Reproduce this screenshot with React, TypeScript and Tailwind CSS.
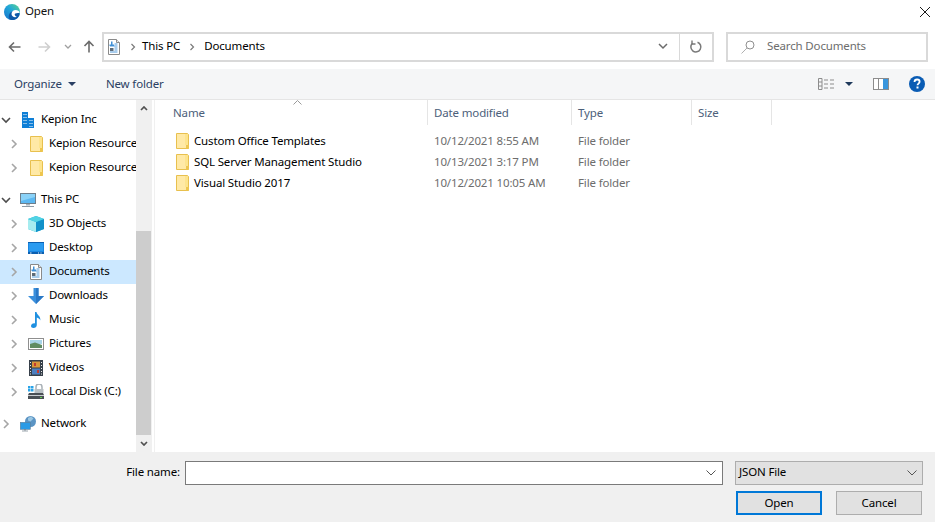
import type { ReactNode } from 'react'

const FONT = "font-['Noto_Sans','Open_Sans',sans-serif]"

function Chevron({ open }: { open?: boolean }) {
  return (
    <svg width="12" height="12" viewBox="0 0 12 12" className="shrink-0" fill="none">
      {open ? (
        <path d="M2 4l4 4 4-4" stroke="#4d4d4d" strokeWidth="1.6" />
      ) : (
        <path d="M4 2l4 4-4 4" stroke="#a6a6a6" strokeWidth="1.6" />
      )}
    </svg>
  )
}

function Folder() {
  return (
    <svg width="16" height="16" viewBox="0 0 16 16" className="shrink-0">
      <path d="M2.500 0.500h11l1 1v14h-12z" fill="#fde48d" stroke="#e8c04e" />
      <path d="M3 1h8v11h3v3H3z" fill="#ffe9a6" />
      <path d="M12 12h3v3.500h-3z" fill="#eec64f" />
    </svg>
  )
}

function DocIcon() {
  return (
    <svg width="16" height="16" viewBox="0 0 16 16" className="shrink-0">
      <path d="M2.500 0.500h8l3 3v12h-11z" fill="#fff" stroke="#8a8a8a" />
      <path d="M10.500 0.500v3h3" fill="#e6e6e6" stroke="#8a8a8a" />
      <path d="M8.500 5h3M4 7h7.500M8.500 9h3M8.500 11h3M4 13h7.500" stroke="#3f8fd6" strokeWidth="0.9" />
      <path d="M5 2.500h1.500v3H8V7H3.500V5.500H5z" fill="#3f8fd6" />
      <path d="M4 9h3.500v3H4z" fill="#5d6b78" />
    </svg>
  )
}

const ICONS: Record<string, ReactNode> = {
  building: (
    <svg width="16" height="16" viewBox="0 0 16 16" className="shrink-0">
      <path d="M2 0h6v16H2z" fill="#0f7fd6" />
      <path d="M8 6h6v10H8z" fill="#0f7fd6" />
      <path d="M3.500 2h1v1h-1zM5.500 2h1v1h-1zM3.500 5h1v1h-1zM5.500 5h1v1h-1zM3.500 8h1v1h-1zM5.500 8h1v1h-1zM3.500 11h1v1h-1zM5.500 11h1v1h-1zM9.500 8h1v1h-1zM11.500 8h1v1h-1zM9.500 11h1v1h-1zM11.500 11h1v1h-1zM9.500 14h1v1h-1zM11.500 14h1v1h-1z" fill="#fff" />
    </svg>
  ),
  folder: <Folder />,
  pc: (
    <svg width="16" height="16" viewBox="0 0 16 16" className="shrink-0">
      <rect x="0.500" y="1.500" width="15" height="10" fill="#5cb8f2" stroke="#6e7f8c" />
      <path d="M1 2h14v3L1 9z" fill="#8ad2f8" />
      <path d="M6 12h4v1.500H6z" fill="#a5b2bc" />
      <path d="M2 14h12v1H2z" fill="#8e9ba6" />
    </svg>
  ),
  cube: (
    <svg width="16" height="16" viewBox="0 0 16 16" className="shrink-0">
      <path d="M8 0l8 3v10l-8 3-8-3V3z" fill="#1fb6d6" />
      <path d="M0 3l8 3v10l-8-3z" fill="#a6ecef" />
      <path d="M8 6l8-3v10l-8 3z" fill="#1291c9" />
      <path d="M8 0l8 3-8 3-8-3z" fill="#52d3e4" />
    </svg>
  ),
  desktop: (
    <svg width="16" height="16" viewBox="0 0 16 16" className="shrink-0">
      <rect x="0" y="2" width="16" height="12" fill="#1a86e0" />
      <path d="M1 3h14v8H1z" fill="#2a9bf0" />
      <path d="M0 2h16v1H0zM0 12h16v2H0z" fill="#0b5fb0" />
      <path d="M2 12.500h1.500v1H2zM10 12.500h1v1h-1zM12.500 12.500h1v1h-1z" fill="#e6f2fb" />
    </svg>
  ),
  doc: <DocIcon />,
  download: (
    <svg width="16" height="16" viewBox="0 0 16 16" className="shrink-0">
      <path d="M5.500 0h5v8H16l-8 8-8-8h5.500z" fill="#3a8fdc" />
      <path d="M8 0h2.500v8H16l-8 8z" fill="#2a78c6" />
    </svg>
  ),
  music: (
    <svg width="16" height="16" viewBox="0 0 16 16" className="shrink-0">
      <path d="M7 0h1.500c.3 3 4.500 4 3.800 8.500C11.800 6.500 10 6 8.800 5.500V13c0 1.800-1.500 3-3.300 3C4 16 3 15.200 3 14c0-1.500 1.500-2.700 3.200-2.700.3 0 .6 0 .8.100z" fill="#1f90e0" />
    </svg>
  ),
  pictures: (
    <svg width="16" height="16" viewBox="0 0 16 16" className="shrink-0">
      <rect x="0.500" y="2.500" width="15" height="11" fill="#fff" stroke="#8f8f8f" />
      <path d="M2 4h12v4H2z" fill="#a8d4e8" />
      <path d="M2 8l5-1.500L14 9v3H2z" fill="#5f8c62" />
    </svg>
  ),
  videos: (
    <svg width="16" height="16" viewBox="0 0 16 16" className="shrink-0">
      <rect x="1" y="0" width="14" height="16" fill="#37404a" />
      <path d="M2 2h1v1H2zM2 5h1v1H2zM2 8h1v1H2zM2 11h1v1H2zM2 13.500h1v1H2zM13 2h1v1h-1zM13 5h1v1h-1zM13 8h1v1h-1zM13 11h1v1h-1zM13 13.500h1v1h-1z" fill="#e8e8e8" />
      <path d="M4 1.500h8v6H4z" fill="#d8963a" />
      <path d="M4 8.500h8v6H4z" fill="#4d7fc0" />
      <path d="M6 3h2v3H6zM9 10h2v3H9z" fill="#c23b30" />
    </svg>
  ),
  disk: (
    <svg width="16" height="16" viewBox="0 0 16 16" className="shrink-0">
      <path d="M0 2h2.500v2.500H0zM3 2h2.500v2.500H3zM0 5h2.500v2.500H0zM3 5h2.500v2.500H3z" fill="#29a3e8" />
      <path d="M8 5V3a3 3 0 016 0v2" fill="none" stroke="#a9b1b7" strokeWidth="1.500" />
      <path d="M6.500 5h9v4h-9z" fill="#b9c0c5" />
      <path d="M1 9h14l1 2v4H0v-4z" fill="#4a4f55" />
      <path d="M0 11h16v1H0z" fill="#c9cdd1" />
      <path d="M12 13h2v1h-2z" fill="#5fd04a" />
    </svg>
  ),
  network: (
    <svg width="16" height="16" viewBox="0 0 16 16" className="shrink-0">
      <circle cx="10.500" cy="5.500" r="5.500" fill="#5b94c4" />
      <path d="M8 2l3-1.500 2.500 2-3 3-2.500-1z" fill="#9cc7e2" />
      <rect x="0.300" y="6.300" width="10" height="7" fill="#2b9be6" stroke="#5f7f99" strokeWidth="0.600" />
      <path d="M4 13h2v1.500H4z" fill="#7d8b96" />
      <path d="M2 14.500h6v1H2z" fill="#9aa5ad" />
    </svg>
  ),
}

type NavItem = { label: string; icon: string; indent?: boolean; open?: boolean; selected?: boolean }

const GROUPS: NavItem[][] = [
  [
    { label: 'Kepion Inc', icon: 'building', open: true },
    { label: 'Kepion Resources', icon: 'folder', indent: true },
    { label: 'Kepion Resources', icon: 'folder', indent: true },
  ],
  [
    { label: 'This PC', icon: 'pc', open: true },
    { label: '3D Objects', icon: 'cube', indent: true },
    { label: 'Desktop', icon: 'desktop', indent: true },
    { label: 'Documents', icon: 'doc', indent: true, selected: true },
    { label: 'Downloads', icon: 'download', indent: true },
    { label: 'Music', icon: 'music', indent: true },
    { label: 'Pictures', icon: 'pictures', indent: true },
    { label: 'Videos', icon: 'videos', indent: true },
    { label: 'Local Disk (C:)', icon: 'disk', indent: true },
  ],
  [{ label: 'Network', icon: 'network' }],
]

const FILES = [
  { name: 'Custom Office Templates', date: '10/12/2021 8:55 AM' },
  { name: 'SQL Server Management Studio', date: '10/13/2021 3:17 PM' },
  { name: 'Visual Studio 2017', date: '10/12/2021 10:05 AM' },
]

function NavRow({ item }: { item: NavItem }) {
  return (
    <div
      className={`flex h-6 items-center whitespace-nowrap text-black ${item.indent ? 'pl-2' : ''} ${
        item.selected ? 'bg-[#cce8ff]' : ''
      }`}
    >
      <Chevron open={item.open} />
      <div className="ml-2 flex w-4 shrink-0 justify-center">{ICONS[item.icon]}</div>
      <span className="ml-[5px] pb-[2px]">{item.label}</span>
    </div>
  )
}

function HeaderCell({ label, className }: { label: string; className: string }) {
  return (
    <div className={`flex h-[25px] shrink-0 items-center border-r border-[#e5e5e5] pl-[6px] text-[#4c607a] ${className}`}>
      {label}
    </div>
  )
}

export default function App() {
  return (
    <div className={`flex h-[522px] w-[935px] flex-col overflow-hidden bg-white text-[11.5px] leading-4 tracking-[-0.15px] ${FONT}`}>
      {/* title bar */}
      <div className="flex h-6 shrink-0 items-center justify-between pl-1 pr-[4px]">
        <div className="flex items-center gap-[5px]">
          <svg width="16" height="16" viewBox="0 0 16 16" className="-mt-[1px]">
            <defs>
              <linearGradient id="edgeA" x1="1" y1="0" x2="0" y2="1">
                <stop offset="0" stopColor="#5fd68a" />
                <stop offset="0.45" stopColor="#22a8d8" />
                <stop offset="1" stopColor="#1570cc" />
              </linearGradient>
            </defs>
            <circle cx="8" cy="8" r="8" fill="url(#edgeA)" />
            <path d="M15.500 11c-1 3-4 5-7.500 5-1 0-1.500-.1-2.300-.4C4 13 4.500 9 8 7.500c2.500-1 6.500-.5 7.500 1.500z" fill="#0d5aa8" />
            <path d="M7.500 10c0-2.500 2-4 4-4 2.200 0 3.800 1 4.300 2.500-1.200 1-4.800.2-5.100 1.800-.2 1.200 1 2.200 2.300 2.500-2.500 1-5.500-.3-5.500-2.800z" fill="#fff" />
          </svg>
          <span className="pb-[2px] text-[#111]">Open</span>
        </div>
        <svg width="12" height="12" viewBox="0 0 12 12" fill="none">
          <path d="M1 1l10 10M11 1L1 11" stroke="#1a1a1a" />
        </svg>
      </div>

      {/* address bar */}
      <div className="flex h-[45px] shrink-0 items-center pl-2 pr-[7px]">
        <div className="flex w-[94px] shrink-0 items-center">
          <svg width="13" height="12" viewBox="0 0 13 12" fill="none">
            <path d="M12.500 6H1.500M6 1.500L1.500 6 6 10.500" stroke="#6b6b6b" strokeWidth="1.600" />
          </svg>
          <svg width="13" height="12" viewBox="0 0 13 12" fill="none" className="ml-[17px]">
            <path d="M0.500 6h11M7 1.500L11.500 6 7 10.500" stroke="#cfcfcf" strokeWidth="1.600" />
          </svg>
          <svg width="8" height="6" viewBox="0 0 8 6" fill="none" className="ml-[13px]">
            <path d="M1 1l3 3 3-3" stroke="#a0a0a0" strokeWidth="1.300" />
          </svg>
          <svg width="12" height="13" viewBox="0 0 12 13" fill="none" className="ml-[11px]">
            <path d="M6 12.500V1.500M1.500 6L6 1.500 10.500 6" stroke="#6b6b6b" strokeWidth="1.600" />
          </svg>
        </div>
        <div className="flex h-[30px] w-[612px] shrink-0 items-center border-2 border-[#d9d9d9] pl-[2px]">
          <DocIcon />
          <svg width="6" height="8" viewBox="0 0 6 8" fill="none" className="ml-[8px]">
            <path d="M1.500 1l3 3-3 3" stroke="#7a7a7a" strokeWidth="1.200" />
          </svg>
          <span className="ml-[6px] pb-[2px] text-black">This PC</span>
          <svg width="6" height="8" viewBox="0 0 6 8" fill="none" className="ml-[9px]">
            <path d="M1.500 1l3 3-3 3" stroke="#7a7a7a" strokeWidth="1.200" />
          </svg>
          <span className="ml-[9px] pb-[2px] text-black">Documents</span>
          <svg width="10" height="7" viewBox="0 0 10 7" fill="none" className="ml-auto mr-[11px]">
            <path d="M1 1l4 4 4-4" stroke="#6b6b6b" strokeWidth="1.500" />
          </svg>
          <div className="flex h-full w-[33px] items-center justify-center border-l border-[#d9d9d9]">
            <svg width="14" height="14" viewBox="0 0 14 14" fill="none">
              <path d="M8.500 2.200A5 5 0 1 1 3.500 3.200" stroke="#7a7a7a" strokeWidth="1.500" />
              <path d="M3 0.500v3.500h3.500" stroke="#7a7a7a" strokeWidth="1.400" />
            </svg>
          </div>
        </div>
        <div className="ml-3 flex h-[30px] w-[202px] shrink-0 items-center border-2 border-[#d9d9d9] pl-[13px]">
          <svg width="14" height="14" viewBox="0 0 14 14" fill="none">
            <circle cx="9" cy="5" r="4" stroke="#8f8f8f" />
            <path d="M6 8l-5.500 5.500" stroke="#b0b0b0" />
          </svg>
          <span className="ml-[12px] pb-[2px] text-[#6d6d6d]">Search Documents</span>
        </div>
      </div>

      {/* toolbar */}
      <div className="flex h-[31px] shrink-0 items-center justify-between border-b border-[#e5e5e5] bg-[#f5f6f7] pl-[14px] pr-[10px] text-[#2a3f63]">
        <div className="flex items-center">
          <span>Organize</span>
          <svg width="8" height="4" viewBox="0 0 8 4" className="ml-[6px]">
            <path d="M0 0h8L4 4z" fill="#2a3f63" />
          </svg>
          <span className="ml-[30px]">New folder</span>
        </div>
        <div className="flex items-center">
          <svg width="17" height="12" viewBox="0 0 17 12" fill="none">
            <path d="M0.500 0.500h3.500v11H0.500zM0.500 4h3.500M0.500 8h3.500" stroke="#8c8c8c" />
            <path d="M6 2h4M12 2h4M6 6h4M12 6h4M6 10h4M12 10h4" stroke="#8c8c8c" />
          </svg>
          <svg width="8" height="4" viewBox="0 0 8 4" className="ml-[10px]">
            <path d="M0 0h8L4 4z" fill="#1e395b" />
          </svg>
          <svg width="16" height="12" viewBox="0 0 16 12" className="ml-[20px]">
            <rect x="0.500" y="0.500" width="15" height="11" fill="#fff" stroke="#8c8c8c" />
            <path d="M5 1h1v10H5z" fill="#8c8c8c" />
            <path d="M10 1h5v10h-5z" fill="#3a96dd" />
          </svg>
          <svg width="16" height="16" viewBox="0 0 16 16" className="ml-[20px]">
            <circle cx="8" cy="8" r="8" fill="#0a5cb4" />
            <path d="M5.500 6c0-1.600 1.100-2.500 2.600-2.500S10.600 4.300 10.600 5.700c0 1.800-2.100 2-2.100 3.500" fill="none" stroke="#fff" strokeWidth="1.800" />
            <rect x="7.500" y="10.500" width="2" height="2" fill="#fff" />
          </svg>
        </div>
      </div>

      {/* main */}
      <div className="flex min-h-0 flex-1">
        <div className="w-[136px] shrink-0 overflow-hidden pt-2">
          {GROUPS.map((group, i) => (
            <div key={i} className="mb-2">
              {group.map((item, j) => (
                <NavRow key={j} item={item} />
              ))}
            </div>
          ))}
        </div>

        <div className="flex w-[16px] shrink-0 flex-col bg-[#f0f0f0]">
          <div className="flex h-[17px] items-center justify-center">
            <svg width="8" height="5" viewBox="0 0 8 5" fill="none">
              <path d="M1 4l3-3 3 3" stroke="#505050" strokeWidth="1.700" />
            </svg>
          </div>
          <div className="mt-[114px] mr-[1px] flex-1 bg-[#cdcdcd]" />
          <div className="flex h-[17px] items-center justify-center">
            <svg width="8" height="5" viewBox="0 0 8 5" fill="none">
              <path d="M1 1l3 3 3-3" stroke="#505050" strokeWidth="1.700" />
            </svg>
          </div>
        </div>

        <div className="ml-[2px] min-w-0 flex-1 border-l border-[#f0f0f0]">
          <div className="relative flex">
            <svg width="9" height="5" viewBox="0 0 9 5" fill="none" className="absolute left-[138px] top-0">
              <path d="M0.500 4.500l4-4 4 4" stroke="#9a9a9a" />
            </svg>
            <HeaderCell label="Name" className="w-[273px] pl-[18px]" />
            <HeaderCell label="Date modified" className="w-[144px]" />
            <HeaderCell label="Type" className="w-[120px]" />
            <HeaderCell label="Size" className="w-[80px]" />
          </div>
          <div className="pt-[5px]">
            {FILES.map((f) => (
              <div key={f.name} className="flex h-[21px] items-center">
                <div className="flex w-[273px] shrink-0 items-center whitespace-nowrap pl-[19px]">
                  <Folder />
                  <span className="ml-1 text-black">{f.name}</span>
                </div>
                <div className="w-[144px] shrink-0 whitespace-nowrap pl-[6px] text-[#6d6d6d]">{f.date}</div>
                <div className="pl-[6px] text-[#6d6d6d]">File folder</div>
              </div>
            ))}
          </div>
        </div>
      </div>

      {/* footer */}
      <div className="h-[70px] shrink-0 bg-[#f0f0f0] pt-[9px]">
        <div className="flex items-center">
          <div className="w-[180px] shrink-0 pb-[2px] text-right text-black">File name:</div>
          <div className="ml-[5px] flex h-[24px] w-[538px] shrink-0 items-center justify-end border border-[#7a7a7a] bg-white pr-[6px]">
            <svg width="10" height="6" viewBox="0 0 10 6" fill="none">
              <path d="M0.500 0.500l4.500 4.500 4.500-4.500" stroke="#555" />
            </svg>
          </div>
          <div className="ml-[12px] flex h-[24px] w-[188px] shrink-0 items-center justify-between border border-[#adadad] bg-[#e1e1e1] pl-[3px] pr-[5px] text-black">
            <span className="pb-[2px]">JSON File</span>
            <svg width="10" height="6" viewBox="0 0 10 6" fill="none">
              <path d="M0.500 0.500l4.500 4.500 4.500-4.500" stroke="#555" />
            </svg>
          </div>
        </div>
        <div className="mt-[6px] flex justify-start pl-[736px]">
          <button className="h-[24px] w-[86px] border-2 border-[#0078d7] bg-[#e1e1e1] text-black">Open</button>
          <button className="ml-[14px] h-[24px] w-[86px] border border-[#adadad] bg-[#e1e1e1] text-black">Cancel</button>
        </div>
      </div>
    </div>
  )
}
